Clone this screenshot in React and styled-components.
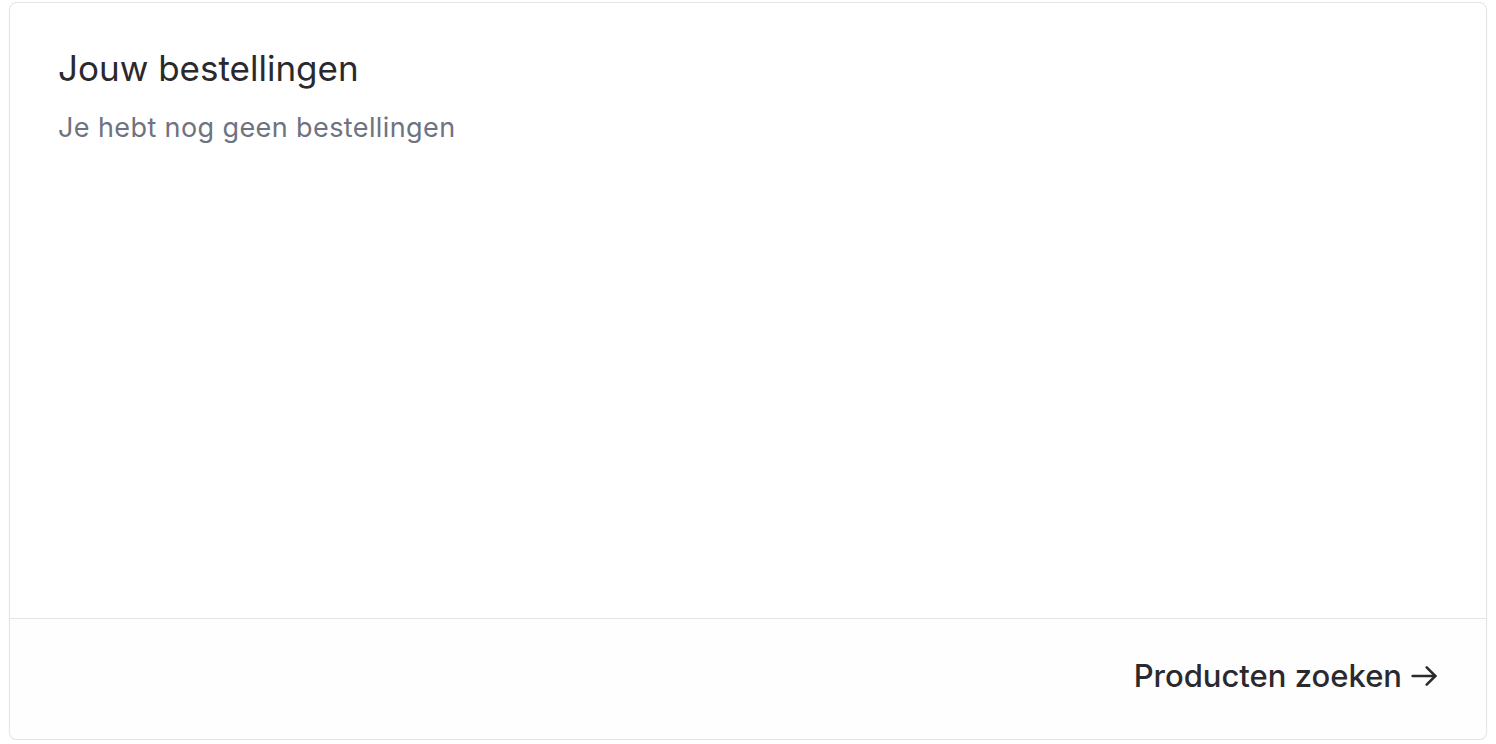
import styled, { createGlobalStyle } from "styled-components";

const GlobalStyle = createGlobalStyle`
  body {
    margin: 0;
    background: #ffffff;
    font-family: Inter, "Noto Sans", sans-serif;
  }
`;

function App() {
  return (
    <>
      <GlobalStyle />
      <Page>
        <Card>
          <Body>
            <Title>Jouw bestellingen</Title>
            <Empty>Je hebt nog geen bestellingen</Empty>
          </Body>
          <Footer>
            <LinkButton href="#">
              Producten zoeken
              <svg width="32" height="32" viewBox="0 0 24 24" fill="none" stroke="currentColor" strokeWidth="1.9" strokeLinecap="round" strokeLinejoin="round">
                <path d="M3.5 12h17" />
                <path d="M14 5.5l6.5 6.5-6.5 6.5" />
              </svg>
            </LinkButton>
          </Footer>
        </Card>
      </Page>
    </>
  );
}

export default App;

const Page = styled.div`
  padding: 2px 9px 0 9px;
`;

const Card = styled.div`
  height: 738px;
  box-sizing: border-box;
  display: flex;
  flex-direction: column;
  border: 1px solid #e3e3e8;
  border-radius: 8px;
  box-shadow: 0 1px 2px rgba(0, 0, 0, 0.06);
  overflow: hidden;
  background: #ffffff;
`;

const Body = styled.div`
  flex: 1;
  padding: 45px 48px;
`;

const Title = styled.h2`
  margin: 0;
  font-size: 35px;
  font-weight: 400;
  color: #2a2a2e;
  line-height: 40px;
`;

const Empty = styled.p`
  margin: 24px 0 0;
  font-size: 27px;
  letter-spacing: 0.4px;
  color: #6e7381;
  line-height: 32px;
`;

const Footer = styled.div`
  height: 121px;
  box-sizing: border-box;
  border-top: 1px solid #e5e5ea;
  background: #fefefe;
  display: flex;
  align-items: center;
  justify-content: flex-end;
  padding: 0 46px 7px;
`;

const LinkButton = styled.a`
  display: flex;
  align-items: center;
  gap: 6px;
  font-size: 31px;
  font-weight: 500;
  color: #2a2a2e;
  text-decoration: none;
`;
